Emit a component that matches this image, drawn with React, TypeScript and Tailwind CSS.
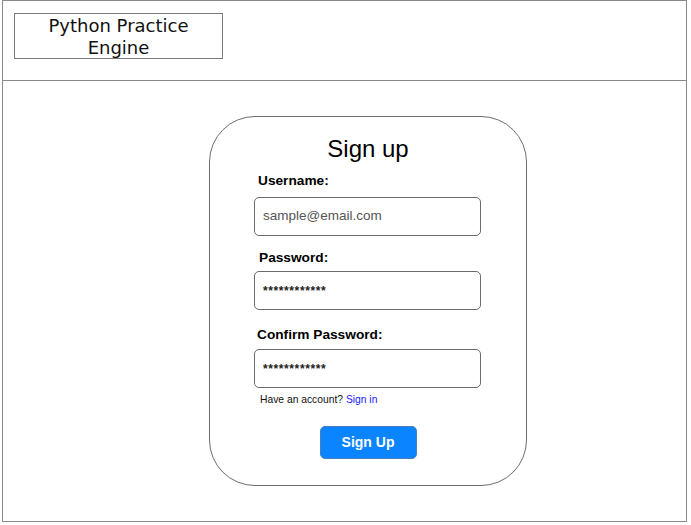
import React from 'react'

type FieldProps = {
  label: string
  value?: string
  placeholder?: string
  labelPad: string
  top: string
  gap: string
}

function Field({ label, value, placeholder, labelPad, top, gap }: FieldProps) {
  return (
    <div className={top}>
      <div className={`${labelPad} text-[13.7px] font-bold leading-[16px] text-black`}>{label}</div>
      <div className={`${gap} ml-[44px] flex h-[39px] w-[227px] items-center rounded-[5px] border border-[#6b6b6b] pl-[8px]`}>
        {placeholder ? (
          <span className="text-[13.5px] text-[#555]">{placeholder}</span>
        ) : (
          <span className="text-[12px] font-bold tracking-[0.6px] text-[#222]">{value}</span>
        )}
      </div>
    </div>
  )
}

export default function App() {
  return (
    <div className="h-[525px] w-[691px] bg-white font-['Liberation_Sans',Arial,sans-serif]">
      <div className="ml-[2px] flex h-[522px] w-[685px] flex-col border border-[#8a8a8a]">
        <div className="h-[80px] shrink-0 border-b border-[#8a8a8a] pl-[11px] pt-[12px]">
          <div className="flex h-[46px] w-[209px] flex-col items-center justify-center border border-[#7a7a7a] pt-[2px] font-['DejaVu_Sans',sans-serif] text-[18px] leading-[22px] text-[#111]">
            <span>Python Practice</span>
            <span>Engine</span>
          </div>
        </div>

        <div className="flex-1 pl-[206px] pt-[35px]">
          <div className="h-[370px] w-[318px] rounded-[46px] border border-[#6e6e6e]">
            <div className="pt-[16px] text-center text-[24px] leading-[32px] text-black">Sign up</div>
            <Field top="mt-[8px]" gap="mt-[8px]" labelPad="pl-[48px]" label="Username:" placeholder="sample@email.com" />
            <Field top="mt-[14px]" gap="mt-[5px]" labelPad="pl-[49px]" label="Password:" value="************" />
            <Field top="mt-[17px]" gap="mt-[6px]" labelPad="pl-[47px]" label="Confirm Password:" value="************" />
            <div className="ml-[50px] mt-[5px] text-[10.3px] leading-[14px] text-[#111]">
              Have an account? <span className="text-[#1a1aff]">Sign in</span>
            </div>
            <div className="mt-[19px] flex justify-center">
              <button className="h-[33px] w-[97px] rounded-[5px] border border-[#4a7fc0] bg-[#0a84ff] text-[14px] font-bold text-white">
                Sign Up
              </button>
            </div>
          </div>
        </div>
      </div>
    </div>
  )
}
